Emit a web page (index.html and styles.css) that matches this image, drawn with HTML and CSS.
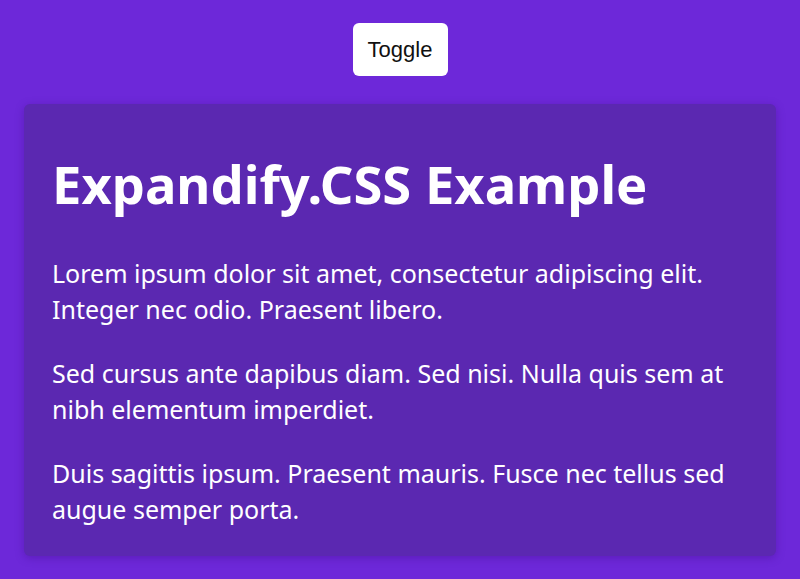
FILE: index.html
```html
<!DOCTYPE html>
<html lang="en">
<head>
<meta charset="utf-8">
<title>Expandify.CSS Example</title>
<link rel="stylesheet" href="styles.css">
</head>
<body>
<div class="page">
  <button class="toggle" type="button">Toggle</button>
  <section class="card">
    <h1 class="title">Expandify.CSS Example</h1>
    <p class="text">Lorem ipsum dolor sit amet, consectetur adipiscing elit. Integer nec odio. Praesent libero.</p>
    <p class="text">Sed cursus ante dapibus diam. Sed nisi. Nulla quis sem at nibh elementum imperdiet.</p>
    <p class="text">Duis sagittis ipsum. Praesent mauris. Fusce nec tellus sed augue semper porta.</p>
  </section>
</div>
</body>
</html>
```

FILE: styles.css
```css
html, body {
  margin: 0;
  padding: 0;
  height: 100%;
}
body {
  background: #6d28d9;
  font-family: "Noto Sans", "Open Sans", sans-serif;
  color: #fff;
  overflow: hidden;
}
.page {
  display: flex;
  flex-direction: column;
  align-items: center;
  padding: 23px 24px 0;
  gap: 28px;
}
.toggle {
  background: #fff;
  color: #111;
  border: none;
  border-radius: 6px;
  width: 95px;
  height: 53px;
  font-family: "Liberation Sans", Arial, sans-serif;
  font-size: 22px;
  padding: 0;
}
.card {
  align-self: stretch;
  background: #5b28b1;
  border-radius: 6px;
  box-shadow: 0 2px 8px rgba(60, 10, 130, 0.35);
  padding: 40px 28px 29px;
}
.title {
  margin: 0 0 31px;
  font-size: 52.5px;
  line-height: 80px;
  font-weight: 700;
}
.text {
  margin: 0 0 28px;
  font-size: 25px;
  line-height: 36px;
}
.text:last-child {
  margin-bottom: 0;
}
```
